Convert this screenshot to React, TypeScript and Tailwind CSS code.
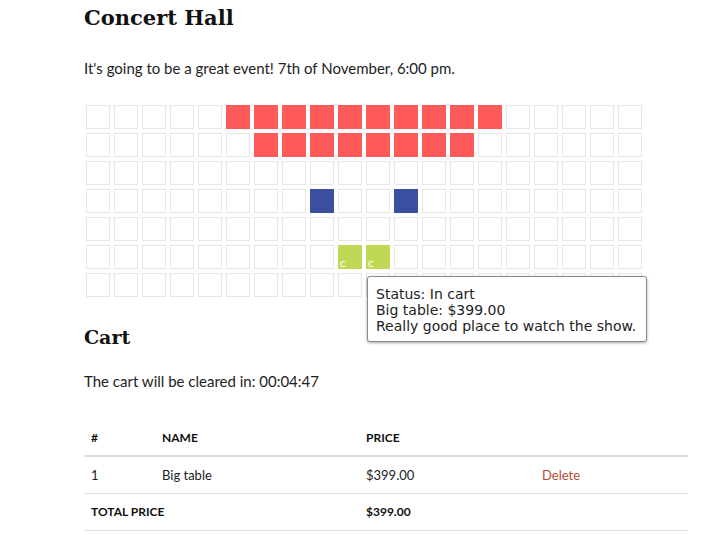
import React from 'react'

type SeatState = 'free' | 'sold' | 'reserved' | 'cart'

const COLS = 20
const ROWS = 7

const seatState = (row: number, col: number): SeatState => {
  if (row === 0 && col >= 5 && col <= 14) return 'sold'
  if (row === 1 && col >= 6 && col <= 13) return 'sold'
  if (row === 3 && (col === 8 || col === 11)) return 'reserved'
  if (row === 5 && (col === 9 || col === 10)) return 'cart'
  return 'free'
}

const seatClass: Record<SeatState, string> = {
  free: 'border border-[#e6e6e6] bg-white',
  sold: 'bg-[#ff5a5a]',
  reserved: 'bg-[#3b4fa0]',
  cart: 'bg-[#bfd957]',
}

const Seat: React.FC<{ state: SeatState }> = ({ state }) => (
  <div className={`relative w-[24px] h-[24px] box-border ${seatClass[state]}`}>
    {state === 'cart' && (
      <span className="absolute left-[2px] bottom-[0px] text-[12px] leading-[12px] text-white">c</span>
    )}
  </div>
)

export default function App() {
  const heading = { fontFamily: '"DejaVu Serif", "Liberation Serif", serif' }
  const body = { fontFamily: 'Lato, "Liberation Sans", sans-serif' }

  return (
    <div className="w-[701px] h-[535px] overflow-hidden bg-white text-[#222]" style={body}>
      <div className="pl-[84px] w-[688px]">
        <h1 className="pt-[3px] text-[21px] leading-[30px] font-bold text-[#111]" style={heading}>
          Concert Hall
        </h1>
        <p className="mt-[25px] text-[15px] leading-[20px]">
          It's going to be a great event! 7th of November, 6:00 pm.
        </p>

        <div className="relative mt-[27px] ml-[2px] w-[556px]">
          <div className="grid grid-cols-[repeat(20,24px)] gap-[4px]">
            {Array.from({ length: ROWS * COLS }).map((_, i) => (
              <Seat key={i} state={seatState(Math.floor(i / COLS), i % COLS)} />
            ))}
          </div>
          <div
            className="absolute left-[281px] top-[171px] w-[280px] h-[66px] box-border border border-[#8a8a8a] rounded-[3px] bg-white shadow-[0_1px_3px_rgba(0,0,0,0.35)] pl-[8px] pt-[9px] text-[14px] leading-[16px] text-[#222]"
            style={{ fontFamily: '"DejaVu Sans", Verdana, sans-serif' }}
          >
            <div>Status: In cart</div>
            <div>Big table: $399.00</div>
            <div>Really good place to watch the show.</div>
          </div>
        </div>

        <h2 className="mt-[27px] text-[19px] leading-[26px] font-bold text-[#111]" style={heading}>
          Cart
        </h2>
        <p className="mt-[21px] text-[15px] leading-[20px]">The cart will be cleared in: 00:04:47</p>

        <div className="mt-[29px] w-[604px] text-[13px] leading-[18px]">
          <div className="grid grid-cols-[70px_204px_176px_154px] h-[37px] items-center border-b-2 border-[#dddddd] font-bold text-[#111] text-[12px]">
            <div className="pl-[7px]">#</div>
            <div className="pl-[8px]">NAME</div>
            <div className="pl-[8px]">PRICE</div>
            <div></div>
          </div>
          <div className="grid grid-cols-[70px_204px_176px_154px] h-[37px] items-center border-b border-[#dddddd]">
            <div className="pl-[7px]">1</div>
            <div className="pl-[8px]">Big table</div>
            <div className="pl-[8px]">$399.00</div>
            <div className="pl-[8px] text-[#b94a3a]">Delete</div>
          </div>
          <div className="grid grid-cols-[70px_204px_176px_154px] h-[37px] items-center border-b border-[#dddddd] font-bold text-[#111] text-[12px]">
            <div className="pl-[7px] col-span-2">TOTAL PRICE</div>
            <div className="pl-[8px]">$399.00</div>
            <div></div>
          </div>
        </div>
      </div>
    </div>
  )
}
